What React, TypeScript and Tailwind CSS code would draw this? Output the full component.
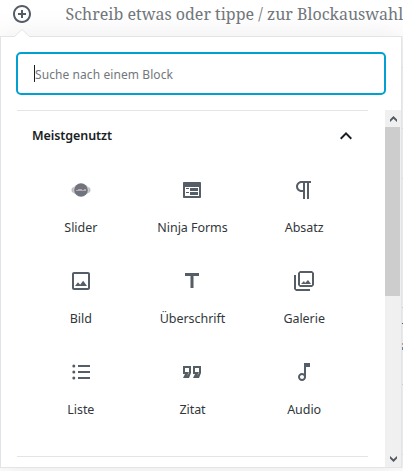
import React from 'react';

interface Block {
  title: string;
  icon: React.ReactNode;
}

const Icon24 = ({ children }: { children: React.ReactNode }) => (
  <svg width="24" height="24" viewBox="0 0 24 24" fill="currentColor">
    {children}
  </svg>
);

const SliderIcon = () => (
  <svg width="20" height="20" viewBox="0 0 20 20">
    <path d="M4.500 6C-.3 7.500-.3 12.500 4.500 14zM15.500 6c4.800 1.500 4.800 6.500 0 8z" fill="#c9cbce" />
    <path d="M2 7.500c-1.300 1.500-1.300 3.500 0 5M18 7.500c1.300 1.500 1.300 3.500 0 5" fill="none" stroke="#b3b5b8" />
    <circle cx="10" cy="10" r="6.800" fill="#6f747f" />
    <rect x="5" y="9" width="10" height="2" fill="#b2aeb5" />
    <path d="M5 9.500h2M11 9.500h2" stroke="#a65f6c" />
  </svg>
);

const blocks: Block[] = [
  { title: 'Slider', icon: <SliderIcon /> },
  {
    title: 'Ninja Forms',
    icon: (
      <svg width="20" height="20" viewBox="0 0 20 20" fill="currentColor">
        <path d="M2 2h16c.55 0 1 .45 1 1v14c0 .55-.45 1-1 1H2c-.55 0-1-.45-1-1V3c0-.55.45-1 1-1zm15 14V7H3v9h14zM4 8v1h3V8H4zm4 0v3h8V8H8zm-4 4v1h3v-1H4zm4 0v3h8v-3H8z" />
      </svg>
    ),
  },
  {
    title: 'Absatz',
    icon: <Icon24><path d="M11 5v7H9.500C7.600 12 6 10.400 6 8.500S7.600 5 9.500 5H11m8-2H9.500C6.500 3 4 5.500 4 8.500S6.500 14 9.500 14H11v7h2V5h2v16h2V5h2V3z" /></Icon24>,
  },
  {
    title: 'Bild',
    icon: (
      <Icon24>
        <path d="M19 5v14H5V5h14m0-2H5c-1.100 0-2 .9-2 2v14c0 1.100.9 2 2 2h14c1.100 0 2-.9 2-2V5c0-1.100-.9-2-2-2z" />
        <path d="M14.140 11.860l-3 3.870L9 13.140 6 17h12l-3.860-5.140z" />
      </Icon24>
    ),
  },
  { title: 'Überschrift', icon: <Icon24><path d="M5 4v3h5.500v12h3V7H19V4z" /></Icon24> },
  {
    title: 'Galerie',
    icon: (
      <Icon24>
        <path d="M20 4v12H8V4h12m0-2H8L6 4v12l2 2h12l2-2V4l-2-2z" />
        <path d="M12 12l1 2 3-3 3 4H9z" />
        <path d="M2 6v14l2 2h14v-2H4V6H2z" />
      </Icon24>
    ),
  },
  {
    title: 'Liste',
    icon: (
      <Icon24>
        <path d="M9 19h12v-2H9v2zm0-6h12v-2H9v2zm0-8v2h12V5H9z" />
        <circle cx="4.800" cy="6" r="1.500" />
        <circle cx="4.800" cy="12" r="1.500" />
        <circle cx="4.800" cy="18" r="1.500" />
      </Icon24>
    ),
  },
  {
    title: 'Zitat',
    icon: <Icon24><path d="M19 18h-6l2-4h-2V6h8v7l-2 5zm-2-2l2-3V8h-4v4h4l-2 4zm-8 2H3l2-4H3V6h8v7l-2 5zm-2-2l2-3V8H5v4h4l-2 4z" /></Icon24>,
  },
  {
    title: 'Audio',
    icon: <Icon24><path d="M12 3l.01 10.550c-.59-.34-1.270-.55-2-.55C7.790 13 6 14.790 6 17s1.790 4 4.010 4S14 19.210 14 17V7h4V3h-6zm-1.990 16c-1.100 0-2-.9-2-2s.9-2 2-2 2 .9 2 2-.9 2-2 2z" /></Icon24>,
  },
];

const Scrollbar = () => (
  <div className="flex w-4 shrink-0 flex-col bg-[#f0f0f0] text-[#505860]">
    <div className="flex h-[17px] items-center justify-center">
      <svg width="7" height="6" viewBox="0 0 7 6" fill="currentColor">
        <path d="M3.500 0L7 3.500V6L3.500 2.800 0 6V3.500z" />
      </svg>
    </div>
    <div className="h-[169px] w-[15px] bg-[#cdcdcd]" />
    <div className="mt-auto flex h-[17px] items-center justify-center">
      <svg width="7" height="6" viewBox="0 0 7 6" fill="currentColor">
        <path d="M3.500 6L7 2.500V0L3.500 3.200 0 0v2.500z" />
      </svg>
    </div>
  </div>
);

// Seitenrand neben dem Popover
const PageEdge = () => (
  <div className="flex w-px flex-col bg-[#f4f4f4]">
    <div className="mt-[31px] h-px bg-[#e2e4e7]" />
    <div className="mt-[60px] h-px bg-[#e2e4e7]" />
    <div className="mt-[49px] h-px bg-[#e2e4e7]" />
    <div className="mt-[128px] h-px bg-[#d5d7da]" />
    <div className="mt-[15px] h-px bg-[#5f6468]" />
    <div className="mt-[19px] h-[2px] bg-[#d5a080]" />
    <div className="mt-[2px] h-[3px] bg-[#7088b5]" />
    <div className="mt-[34px] h-px bg-[#d5d7da]" />
    <div className="mt-[69px] h-px bg-[#e2e4e7]" />
  </div>
);

export default function App() {
  return (
    <div className="flex h-[471px] w-[403px] flex-col overflow-hidden bg-white font-['Noto_Sans',sans-serif]">
      <div className="flex h-9 shrink-0 items-start">
        <button className="ml-[11.500px] mt-1 text-[#555d66]">
          <svg width="20" height="20" viewBox="0 0 20 20" fill="currentColor">
            <path d="M10 1c-5 0-9 4-9 9s4 9 9 9 9-4 9-9-4-9-9-9zm0 16c-3.900 0-7-3.100-7-7s3.100-7 7-7 7 3.100 7 7-3.100 7-7 7zm1-11H9v3H6v2h3v3h2v-3h3V9h-3V6z" />
          </svg>
        </button>
        <p className="ml-[34px] mt-[2px] whitespace-nowrap font-['Noto_Serif','DejaVu_Serif_Condensed','DejaVu_Serif',serif] text-[16px] leading-6 text-[#72777c]">
          Schreib etwas oder tippe / zur Blockauswahl
        </p>
      </div>

      <div className="flex h-[432px] shrink-0">
        <div className="relative flex w-[402px] shrink-0 flex-col border border-[#e2e4e7] bg-white shadow-[0_3px_30px_rgba(25,30,35,0.1)]">
          {/* Pfeil */}
          <svg className="absolute -top-[8px] left-[12px]" width="18" height="9" viewBox="0 0 18 9">
            <path d="M1 8l8-7.500L17 8v1H1z" fill="#fff" />
            <path d="M1 8l8-7.500L17 8" fill="none" stroke="#e2e4e7" />
          </svg>

          <label className="mx-[15px] mt-[15px] flex h-[43px] shrink-0 items-center rounded-[5px] border-2 border-[#00a0d2] pl-4">
            <span className="h-[17px] w-px bg-[#191e23]" />
            <span className="pt-[2px] text-[12px] leading-5 tracking-[0.080px] text-[#72777c]">Suche nach einem Block</span>
          </label>

          <div className="mt-[15px] flex min-h-0 grow">
            <div className="flex grow flex-col pl-4 pr-[17px]">
              <section className="flex h-[346px] flex-col border-t border-[#e2e4e7]">
                <h2 className="flex h-[50px] items-center justify-between pl-[15px] pr-[10px] text-[12.500px] font-semibold tracking-[-0.080px] text-[#191e23]">
                  Meistgenutzt
                  <Icon24><path d="M12 8l-6 6 1.410 1.410L12 10.830l4.590 4.580L18 14z" /></Icon24>
                </h2>
                <ul className="grid grid-cols-3 px-2">
                  {blocks.map((block) => (
                    <li key={block.title} className="flex h-[91px] flex-col items-center pt-[17px] text-[12.500px] tracking-[-0.050px] text-[#32373c]">
                      <span className="flex h-6 items-center text-[#555d66]">{block.icon}</span>
                      <span className="mt-4 leading-5">{block.title}</span>
                    </li>
                  ))}
                </ul>
              </section>
              <div className="border-t border-[#e2e4e7]" />
            </div>
            <Scrollbar />
          </div>
        </div>
        <PageEdge />
      </div>
    </div>
  );
}
